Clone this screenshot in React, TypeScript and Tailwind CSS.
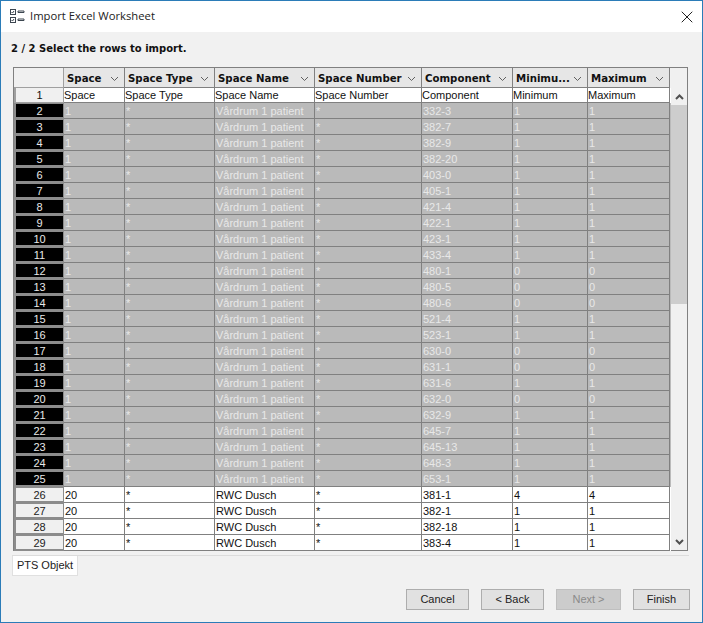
import React from "react";
import { X } from "lucide-react";

const columns = [
  { name: "Space", width: "w-[61px]" },
  { name: "Space Type", width: "w-[90px]" },
  { name: "Space Name", width: "w-[100px]" },
  { name: "Space Number", width: "w-[107px]" },
  { name: "Component", width: "w-[91px]" },
  { name: "Minimu...", width: "w-[75px]" },
  { name: "Maximum", width: "w-[82px]" },
];

const firstRow = ["Space", "Space Type", "Space Name", "Space Number", "Component", "Minimum", "Maximum"];

const selected: [string, string][] = [
  ["332-3", "1"],
  ["382-7", "1"],
  ["382-9", "1"],
  ["382-20", "1"],
  ["403-0", "1"],
  ["405-1", "1"],
  ["421-4", "1"],
  ["422-1", "1"],
  ["423-1", "1"],
  ["433-4", "1"],
  ["480-1", "0"],
  ["480-5", "0"],
  ["480-6", "0"],
  ["521-4", "1"],
  ["523-1", "1"],
  ["630-0", "0"],
  ["631-1", "0"],
  ["631-6", "1"],
  ["632-0", "0"],
  ["632-9", "1"],
  ["645-7", "1"],
  ["645-13", "1"],
  ["648-3", "1"],
  ["653-1", "1"],
];

const plain: [string, string][] = [
  ["381-1", "4"],
  ["382-1", "1"],
  ["382-18", "1"],
  ["383-4", "1"],
];

function Chevron({ up, dark }: { up?: boolean; dark?: boolean }) {
  return (
    <svg width="9" height="6" viewBox="0 0 9 6" fill="none" stroke={dark ? "#505050" : "#606060"} strokeWidth={dark ? 2 : 1} className="shrink-0">
      <path d={up ? "M1 5l3.5-3.5L8 5" : "M1 1l3.5 3.5L8 1"} />
    </svg>
  );
}

function Row({ num, values, isSelected }: { num: number; values: string[]; isSelected: boolean }) {
  return (
    <div className={`flex h-4 ${isSelected ? "bg-[#bababa] text-[#e8e8e8]" : "bg-white text-[#111]"}`}>
      <div
        className={`w-[50px] shrink-0 text-center leading-[15px] border-b-2 border-t border-l-2 border-r border-[#8c8c8c] ${
          isSelected ? "bg-black text-[#e8e8e8]" : "bg-[#f0f0f0] text-[#222]"
        }`}
      >
        {num}
      </div>
      {values.map((value, i) => (
        <div
          key={i}
          className={`${columns[i].width} shrink-0 border-r border-b border-[#808080] pl-px leading-[17px] overflow-hidden whitespace-nowrap`}
        >
          {value}
        </div>
      ))}
    </div>
  );
}

export default function App() {
  return (
    <div
      className="w-[703px] h-[623px] flex flex-col bg-[#f1f1f1] border border-[#2b7cb8]"
      style={{ fontFamily: '"Liberation Sans", sans-serif', fontSize: 11 }}
    >
      {/* title bar */}
      <div className="h-[31px] shrink-0 bg-white flex items-center pl-[9px] pr-[5px]">
        <svg width="15" height="15" viewBox="0 0 15 15" fill="none" stroke="#3c4650" strokeWidth="1">
          <rect x="0.5" y="0.5" width="5" height="5" />
          <rect x="0.5" y="8.5" width="5" height="5" />
          <path d="M8 2h6v1.5H8zM8 10h6v1.5H8z" />
          <path d="M1.5 3l1 1 1.5-2M1.5 11l1 1 1.5-2" />
        </svg>
        <span className="ml-[5px] text-[11.25px] text-[#222]" style={{ fontFamily: '"Open Sans", sans-serif' }}>
          Import Excel Worksheet
        </span>
        <X className="ml-auto text-[#222]" size={20} strokeWidth={1.2} />
      </div>

      <div className="flex-1 flex flex-col min-h-0 px-[10px]">
        <div
          className="h-[35px] pt-[9px] font-bold text-[10px] text-[#111]"
          style={{ fontFamily: '"DejaVu Sans", sans-serif' }}
        >
          2 / 2 Select the rows to import.
        </div>

        {/* table */}
        <div className="w-[677px] h-[489px] shrink-0 ml-[1px] pl-px border-b border-[#dcdcdc]">
          <div className="w-[675px] h-[484px] border border-[#808080] flex">
            <div className="flex-1 min-w-0">
              <div className="flex h-5">
                <div className="w-[50px] shrink-0 bg-[#f0f0f0] border-r border-b border-[#a0a0a0]" />
                {columns.map((col) => (
                  <div
                    key={col.name}
                    className={`${col.width} shrink-0 flex items-center justify-between pl-[3px] pr-[5px] pt-[2px] bg-[#e6e6e6] border-r border-b border-[#808080] font-bold text-[10.2px] text-[#111] whitespace-nowrap`}
                    style={{ fontFamily: '"DejaVu Sans", sans-serif' }}
                  >
                    <span>{col.name}</span>
                    <Chevron />
                  </div>
                ))}
              </div>
              <div className="flex h-[15px] bg-white text-[#111]">
                <div className="w-[50px] shrink-0 text-center leading-[14px] bg-[#f0f0f0] border-b border-l-2 border-r border-[#a0a0a0]">1</div>
                {firstRow.map((value, i) => (
                  <div
                    key={value}
                    className={`${columns[i].width} shrink-0 border-r border-b border-[#808080] leading-[14px] overflow-hidden whitespace-nowrap`}
                  >
                    {value}
                  </div>
                ))}
              </div>
              {selected.map(([component, qty], i) => (
                <Row
                  key={component}
                  num={i + 2}
                  isSelected
                  values={["1", "*", "Vårdrum 1 patient", "*", component, qty, qty]}
                />
              ))}
              {plain.map(([component, qty], i) => (
                <Row
                  key={component}
                  num={i + 26}
                  isSelected={false}
                  values={["20", "*", "RWC Dusch", "*", component, qty, qty]}
                />
              ))}
            </div>

            {/* scrollbar */}
            <div className="w-[16px] shrink-0 flex flex-col bg-[#f0f0f0]">
              <div className="h-5" />
              <div className="h-[17px] flex items-center justify-center">
                <Chevron up dark />
              </div>
              <div className="h-[199px] bg-[#cdcdcd]" />
              <div className="flex-1" />
              <div className="h-[17px] flex items-center justify-center">
                <Chevron dark />
              </div>
            </div>
          </div>
        </div>

        {/* tab */}
        <div className="ml-[1px] w-[66px] h-5 bg-white border border-t-0 border-[#e0e0e0] text-center leading-[19px] text-[#222]">
          PTS Objekt
        </div>

        {/* buttons */}
        <div className="mt-auto mb-[12px] flex justify-end pr-[2px] text-[#222]">
          <button className="w-[63px] h-[21px] bg-[#e1e1e1] border border-[#adadad]">Cancel</button>
          <button className="ml-[12px] w-[63px] h-[21px] bg-[#e1e1e1] border border-[#adadad]">&lt; Back</button>
          <button className="ml-[12px] w-[65px] h-[21px] bg-[#cccccc] border border-[#bfbfbf] text-[#8a8a8a]">Next &gt;</button>
          <button className="ml-[12px] w-[57px] h-[21px] bg-[#e1e1e1] border border-[#adadad]">Finish</button>
        </div>
      </div>
    </div>
  );
}
